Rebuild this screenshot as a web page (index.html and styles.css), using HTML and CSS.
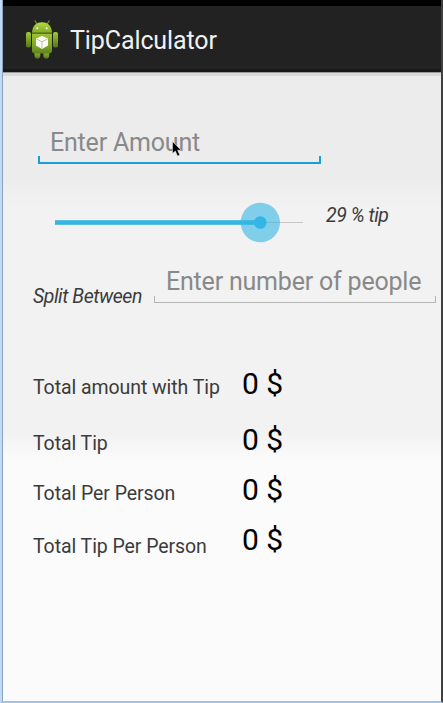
FILE: index.html
```html
<!DOCTYPE html>
<html lang="en">
<head>
<meta charset="utf-8">
<title>TipCalculator</title>
<link rel="stylesheet" href="styles.css">
</head>
<body>
<div class="window">
  <header class="action-bar">
    <svg class="logo" viewBox="0 0 34 40" width="34" height="40">
      <defs>
        <linearGradient id="head" x1="0" y1="0" x2="0" y2="1"><stop offset="0" stop-color="#b5d944"/><stop offset="1" stop-color="#82aa24"/></linearGradient>
        <linearGradient id="body" x1="0" y1="0" x2="0" y2="1"><stop offset="0" stop-color="#9cc235"/><stop offset=".65" stop-color="#7ca326"/><stop offset="1" stop-color="#5f8220"/></linearGradient>
        <linearGradient id="arm" x1="0" y1="0" x2="0" y2="1"><stop offset="0" stop-color="#a0c83a"/><stop offset="1" stop-color="#567518"/></linearGradient>
      </defs>
      <path d="M10 .800L12.200 4.300M24.200 .800L22 4.300" stroke="#779e28" stroke-width="1.100" stroke-linecap="round"/>
      <path d="M9.500 31H15.300V35.500Q15.300 38.600 12.400 38.600T9.500 35.500ZM18.400 31H24.200V35.500Q24.200 38.600 21.300 38.600T18.400 35.500Z" fill="url(#arm)"/>
      <rect x="1" y="12" width="5" height="15.500" rx="1.800" fill="url(#arm)"/>
      <rect x="28" y="12" width="5" height="15.500" rx="1.800" fill="url(#arm)"/>
      <path d="M7 12.800C7.300 5.500 11.500 2.300 17 2.300S26.700 5.500 27 12.800Z" fill="url(#head)"/>
      <path d="M7 13.600H27V30.500Q27 33.500 24 33.500H10Q7 33.500 7 30.500Z" fill="url(#body)"/>
      <circle cx="12.300" cy="8.300" r="1" fill="#f3f8e4"/><circle cx="21.700" cy="8.300" r="1" fill="#f3f8e4"/>
      <path d="M17 16L23 18.500V25.500L17 29L11 25.500V18.500Z" fill="#fbfcf7"/>
      <path d="M11.500 19L17 21.800L22.500 19M17 21.800V28.300" fill="none" stroke="#a4b97a" stroke-width=".8"/>
    </svg>
    <h1 class="title">TipCalculator</h1>
  </header>
  <main class="content">
    <div class="field amount"><span class="hint">Enter Amount</span></div>
    <div class="tip-row">
      <svg class="slider" width="290" height="42" viewBox="0 0 290 42">
        <rect x="17" y="20" width="248" height="1" fill="#c6c6c6"/>
        <rect x="17" y="18.200" width="205" height="4.600" fill="#33b5e5"/>
        <circle cx="222.300" cy="20.500" r="19.700" fill="#33b5e5" fill-opacity=".6"/>
        <circle cx="222.300" cy="20.500" r="6.300" fill="#33b5e5"/>
      </svg>
      <span class="note percent">29 % tip</span>
    </div>
    <div class="split-row">
      <span class="note between">Split Between</span>
      <div class="field people"><span class="hint">Enter number of people</span></div>
    </div>
    <div class="totals">
      <div class="total"><span class="label l1">Total amount with Tip</span><span class="value">0 $</span></div>
      <div class="total"><span class="label l2">Total Tip</span><span class="value">0 $</span></div>
      <div class="total"><span class="label l3">Total Per Person</span><span class="value">0 $</span></div>
      <div class="total last"><span class="label l4">Total Tip Per Person</span><span class="value">0 $</span></div>
    </div>
  </main>
  <svg class="cursor" width="12" height="18" viewBox="0 0 12 18"><path d="M.5 .5V12.500L3.300 10L5.500 15L7.800 14L5.600 9.200H9.200Z" fill="#000" stroke="#eee" stroke-width=".5"/></svg>
</div>
</body>
</html>
```
FILE: styles.css
```css
* { box-sizing: border-box; }
body { margin: 0; font-family: Roboto, "Liberation Sans", sans-serif; }
.window {
  position: relative;
  width: 443px;
  height: 703px;
  overflow: hidden;
  border-style: solid;
  border-width: 0 2px 2px 2px;
  border-color: #000 #404040 #a2c4e4 #c3daf0;
  background: linear-gradient(#ececec 0, #ececec 175px, #f2f2f2 210px, #f2f2f2 433px, #fbfbfb 461px);
  padding-left: 1px;
}
.window::before {
  position: absolute;
  top: 0;
  bottom: 0;
  left: 0;
  width: 1px;
  background: #86a3c5;
  content: "";
}
.action-bar {
  display: flex;
  align-items: flex-start;
  height: 72px;
  padding: 14px 0 0 22px;
  border-top: 6px solid #000;
  border-bottom: 3px solid #181818;
  background: #222;
  box-shadow: 0 1px #9a9a9a, 0 4px #dadada;
}
.logo { flex: none; }
.title {
  margin: 6px 0 0 11px;
  color: #f1f1f1;
  font-size: 25px;
  font-weight: 400;
  line-height: 30px;
  letter-spacing: -.1px;
  white-space: nowrap;
}
.content { display: flow-root; }
.field { position: relative; height: 36px; white-space: nowrap; }
.field::after {
  position: absolute;
  right: 0;
  bottom: 0;
  left: 0;
  height: 6px;
  border: 1px solid #b5b5b5;
  border-top: 0;
  content: "";
}
.hint { display: block; padding-left: 12px; color: #898989; font-size: 25px; line-height: 30px; letter-spacing: -.2px; }
.amount { width: 283px; margin: 56px 0 0 35px; }
.amount::after { border: 2px solid #1a9fd0; border-top: 0; }
.tip-row { display: flex; height: 42px; margin: 38px 0 0 35px; }
.slider { flex: none; }
.note, .label { color: #3b3b3b; font-size: 19.500px; line-height: 24px; white-space: nowrap; }
.note { font-style: italic; letter-spacing: -.45px; }
.label { letter-spacing: -.07px; }
.percent { margin-top: 2px; margin-left: -2px; }
.split-row { display: flex; height: 40px; margin: 23px 0 0 30px; }
.between { width: 121px; margin-top: 18px; }
.people { width: 282px; }
.totals { margin: 59px 0 0 30px; }
.total { display: flex; height: 50px; }
.total:first-child { height: 56px; }
.label { width: 209px; margin-top: 10px; }
.l2, .l3 { margin-top: 10px; }
.last .label { margin-top: 13px; }
.value { color: #000; font-size: 30px; line-height: 36px; white-space: nowrap; }
.cursor { position: absolute; top: 141px; left: 170px; }
```
